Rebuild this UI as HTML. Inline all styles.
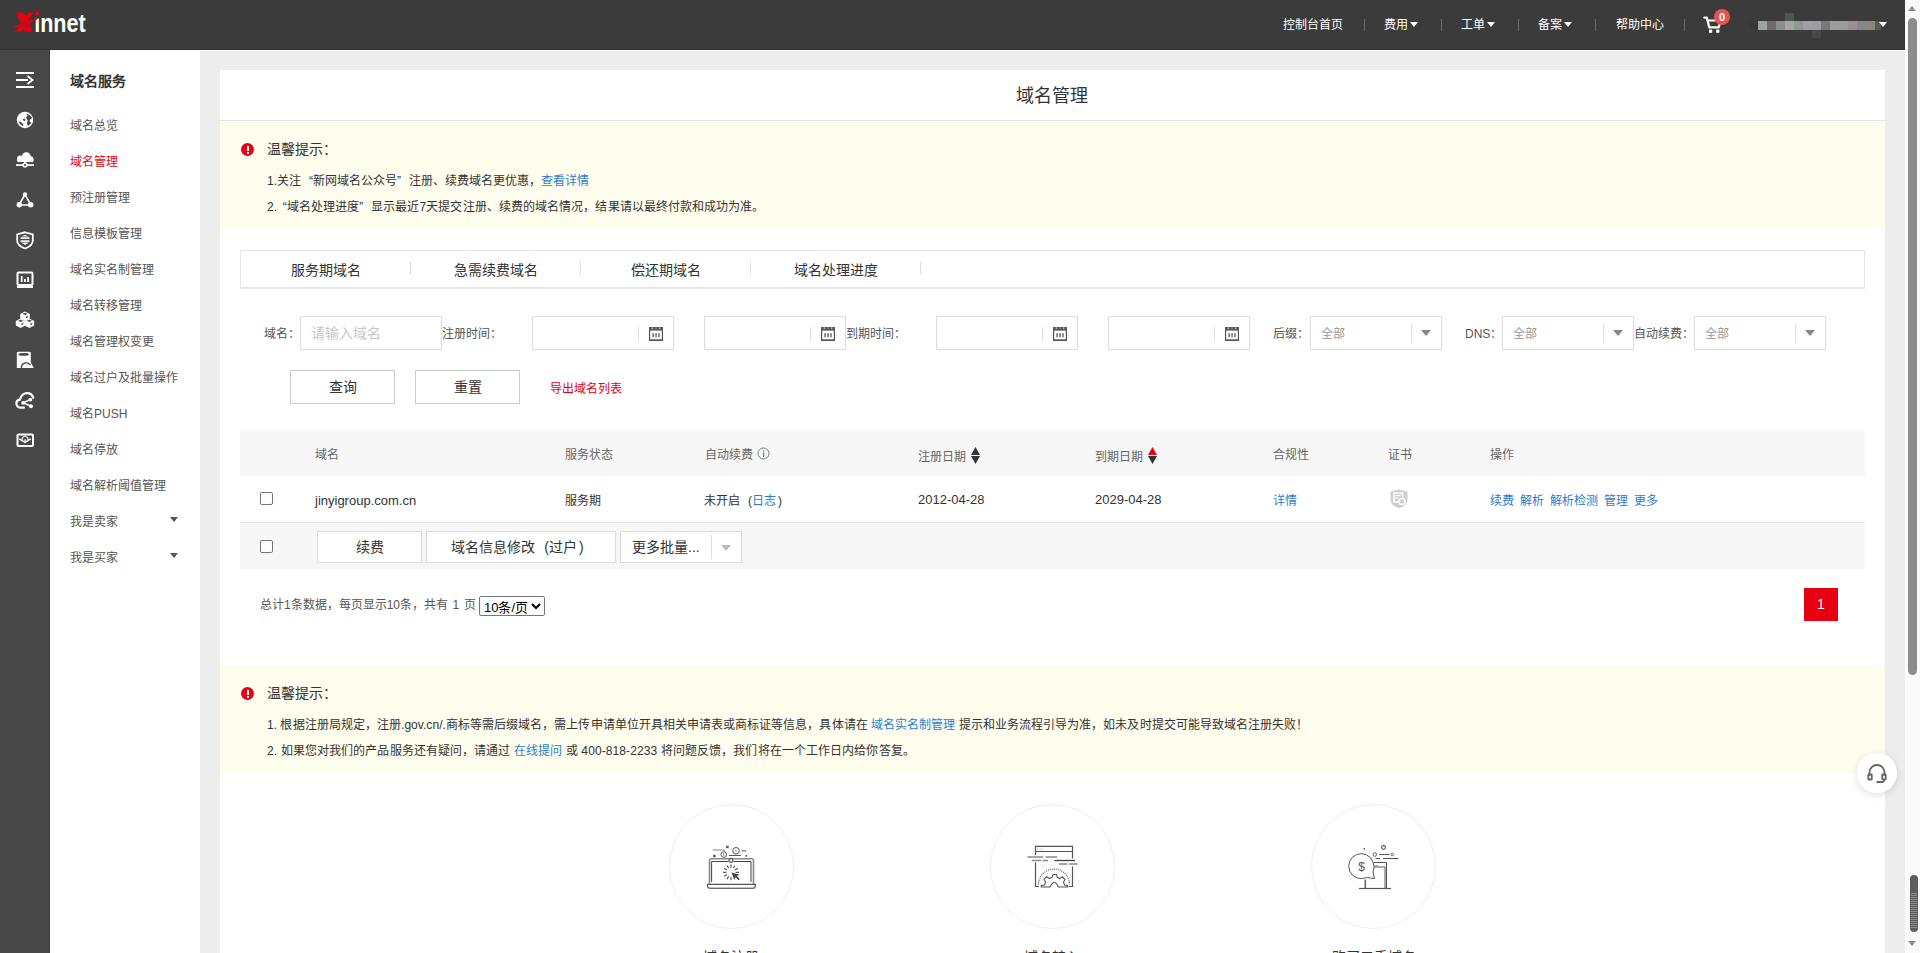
<!DOCTYPE html>
<html lang="zh-CN">
<head>
<meta charset="utf-8">
<title>域名管理</title>
<style>
*{box-sizing:border-box;margin:0;padding:0}
html,body{width:1920px;height:953px;overflow:hidden}
body{position:relative;background:#ededed;font-family:"Liberation Sans",sans-serif;font-size:12px;color:#333}
.a{position:absolute}
.t{position:absolute;white-space:nowrap;line-height:1}
#hdr{left:0;top:0;width:1905px;height:50px;background:#3b3b3b;border-bottom:1px solid #2f2f2f}
#wline{left:50px;top:50px;width:1855px;height:1px;background:#fff}
#icol{left:0;top:50px;width:50px;height:903px;background:#484848;border-right:1px solid #3c3c3c}
#side{left:50px;top:50px;width:150px;height:903px;background:#fff}
#card{left:220px;top:70px;width:1665px;height:883px;background:#fff}
#sb{left:1905px;top:0;width:15px;height:953px;background:#fafafa}
.nav{color:#fff;font-size:12px;font-weight:500}
.sep{position:absolute;width:1px;height:12px;background:#6a6a6a;top:19px}
.tri{position:absolute;width:0;height:0;border-left:4px solid transparent;border-right:4px solid transparent;border-top:5px solid #fff}
.si{color:#555;font-size:12px}
.notice{position:absolute;left:220px;width:1665px;background:#fffdee}
.ex{position:absolute;width:13px;height:13px;border-radius:50%;background:#e60012}
.ex:before{content:"";position:absolute;left:5.5px;top:2.5px;width:2px;height:5px;background:#fff}
.ex:after{content:"";position:absolute;left:5.5px;top:8.5px;width:2px;height:2px;background:#fff}
.ql{display:inline-block;width:12px;text-align:right}.qr{display:inline-block;width:12px;text-align:left}
.blue{color:#2d7bd0!important}
.inp{position:absolute;height:34px;border:1px solid #ddd;background:#fff}
.lbl{color:#555;font-size:12px}
.cal{position:absolute;top:10px;width:14px;height:14px}
.csep{position:absolute;top:9px;width:1px;height:17px;background:#e0e0e0}
.th{font-size:12px;color:#666}
.td{font-size:12px;color:#333}
.cb{position:absolute;width:13px;height:13px;border:1px solid #767676;border-radius:2px;background:#fff}
.btn{position:absolute;border:1px solid #ccc;background:#fff;font-size:14px;color:#333;text-align:center}
</style>
</head>
<body>
<svg width="0" height="0" style="position:absolute"><defs><g id="calg"><rect x="0.6" y="0.6" width="12.8" height="12.8" fill="none" stroke="#555" stroke-width="1.2"/><rect x="0" y="0" width="14" height="3.6" fill="#555"/><rect x="2.6" y="0.3" width="1.4" height="1.8" fill="#bbb"/><rect x="6.3" y="0.3" width="1.4" height="1.8" fill="#888"/><rect x="10" y="0.3" width="1.4" height="1.8" fill="#bbb"/><rect x="12.6" y="12.2" width="0" height="0"/><rect x="3.4" y="6.2" width="1.5" height="4" fill="#666"/><rect x="6.3" y="6.2" width="1.5" height="4" fill="#666"/><rect x="9.2" y="6.2" width="1.5" height="4" fill="#666"/><rect x="0" y="12.4" width="14" height="1.6" fill="#555"/></g></defs></svg>
<div id="hdr" class="a"></div>
<div id="wline" class="a"></div>
<div id="icol" class="a"></div>
<div id="side" class="a"></div>
<div id="card" class="a"></div>
<div id="sb" class="a"></div>



<!-- main content -->
<div class="a" style="left:220px;top:120px;width:1665px;height:1px;background:#e5e5e5"></div>
<div class="t" style="left:1016px;top:87px;font-size:18px;color:#333">域名管理</div>
<div class="notice" style="top:121px;height:109px"></div>
<div class="ex" style="left:241px;top:143px"></div>
<div class="t" style="left:267px;top:142px;font-size:14px;color:#333">温馨提示：</div>
<div class="t" style="left:267px;top:175px;font-size:12px;color:#333">1.关注<span class="ql">“</span>新网域名公众号<span class="qr">”</span>注册、续费域名更优惠，<span class="blue">查看详情</span></div>
<div class="t" style="left:267px;top:201px;font-size:12px;color:#333;letter-spacing:0.08px">2.<span class="ql" style="width:9.6px">“</span>域名处理进度<span class="qr">”</span>显示最近7天提交注册、续费的域名情况，结果请以最终付款和成功为准。</div>

<div class="a" style="left:240px;top:250px;width:1625px;height:39px;border:1px solid #e5e5e5;border-bottom-width:2px"></div>
<div class="t" style="left:291px;top:263px;font-size:14px;color:#333">服务期域名</div>
<div class="t" style="left:454px;top:263px;font-size:14px;color:#333">急需续费域名</div>
<div class="t" style="left:631px;top:263px;font-size:14px;color:#333">偿还期域名</div>
<div class="t" style="left:794px;top:263px;font-size:14px;color:#333">域名处理进度</div>
<div class="a" style="left:410px;top:261px;width:1px;height:14px;background:#e0e0e0"></div>
<div class="a" style="left:580px;top:261px;width:1px;height:14px;background:#e0e0e0"></div>
<div class="a" style="left:750px;top:261px;width:1px;height:14px;background:#e0e0e0"></div>
<div class="a" style="left:920px;top:261px;width:1px;height:14px;background:#e0e0e0"></div>


<!-- filters -->
<div class="t lbl" style="left:264px;top:328px">域名：</div>
<div class="inp" style="left:300px;top:316px;width:142px"></div>
<div class="t" style="left:311px;top:326px;font-size:14px;color:#c8c8c8">请输入域名</div>
<div class="t lbl" style="left:442px;top:328px">注册时间：</div>
<div class="inp" style="left:532px;top:316px;width:142px"><div class="csep" style="left:105px;top:10px;height:14px"></div><svg class="cal" style="left:116px" viewBox="0 0 14 14"><use href="#calg"/></svg></div>
<div class="inp" style="left:704px;top:316px;width:142px"><div class="csep" style="left:105px;top:10px;height:14px"></div><svg class="cal" style="left:116px" viewBox="0 0 14 14"><use href="#calg"/></svg></div>
<div class="t lbl" style="left:846px;top:328px">到期时间：</div>
<div class="inp" style="left:936px;top:316px;width:142px"><div class="csep" style="left:105px;top:10px;height:14px"></div><svg class="cal" style="left:116px" viewBox="0 0 14 14"><use href="#calg"/></svg></div>
<div class="inp" style="left:1108px;top:316px;width:142px"><div class="csep" style="left:105px;top:10px;height:14px"></div><svg class="cal" style="left:116px" viewBox="0 0 14 14"><use href="#calg"/></svg></div>
<div class="t lbl" style="left:1273px;top:328px">后缀：</div>
<div class="inp" style="left:1310px;top:316px;width:132px"><div class="t" style="left:10px;top:11px;color:#999;font-size:12px">全部</div><div class="csep" style="left:100px;top:7px;height:19px"></div><div class="tri" style="left:110px;top:13px;border-left-width:5px;border-right-width:5px;border-top:6px solid #888"></div></div>
<div class="t lbl" style="left:1465px;top:328px">DNS：</div>
<div class="inp" style="left:1502px;top:316px;width:132px"><div class="t" style="left:10px;top:11px;color:#999;font-size:12px">全部</div><div class="csep" style="left:100px;top:7px;height:19px"></div><div class="tri" style="left:110px;top:13px;border-left-width:5px;border-right-width:5px;border-top:6px solid #888"></div></div>
<div class="t lbl" style="left:1634px;top:328px">自动续费：</div>
<div class="inp" style="left:1694px;top:316px;width:132px"><div class="t" style="left:10px;top:11px;color:#999;font-size:12px">全部</div><div class="csep" style="left:100px;top:7px;height:19px"></div><div class="tri" style="left:110px;top:13px;border-left-width:5px;border-right-width:5px;border-top:6px solid #888"></div></div>

<div class="btn" style="left:290px;top:370px;width:105px;height:34px;line-height:32px">查询</div>
<div class="btn" style="left:415px;top:370px;width:105px;height:34px;line-height:32px">重置</div>
<div class="t" style="left:550px;top:383px;color:#e60012;font-size:12px">导出域名列表</div>

<!-- table -->
<div class="a" style="left:240px;top:430px;width:1625px;height:46px;background:#f7f7f7"></div>
<div class="a" style="left:240px;top:522px;width:1625px;height:1px;background:#e8e8e8"></div>
<div class="a" style="left:240px;top:523px;width:1625px;height:46px;background:#f7f7f7"></div>
<div class="t th" style="left:315px;top:449px">域名</div>
<div class="t th" style="left:565px;top:449px">服务状态</div>
<div class="t th" style="left:705px;top:449px">自动续费</div>
<svg class="a" style="left:757px;top:447px" width="13" height="13" viewBox="0 0 13 13"><circle cx="6.5" cy="6.5" r="5.5" fill="none" stroke="#777" stroke-width="1"/><rect x="6" y="5.5" width="1.2" height="4.5" fill="#777"/><rect x="6" y="3.2" width="1.2" height="1.2" fill="#777"/></svg>
<div class="t th" style="left:918px;top:451px">注册日期</div>
<svg class="a" style="left:971px;top:447px" width="9" height="17" viewBox="0 0 9 17"><path d="M4.5,0 L9,8 L0,8 Z" fill="#333"/><path d="M0,9 L9,9 L4.5,17 Z" fill="#333"/></svg>
<div class="t th" style="left:1095px;top:451px">到期日期</div>
<svg class="a" style="left:1148px;top:447px" width="9" height="17" viewBox="0 0 9 17"><path d="M4.5,0 L9,8 L0,8 Z" fill="#e60012"/><path d="M0,9 L9,9 L4.5,17 Z" fill="#333"/></svg>
<div class="t th" style="left:1273px;top:449px">合规性</div>
<div class="t th" style="left:1388px;top:449px">证书</div>
<div class="t th" style="left:1490px;top:449px">操作</div>

<div class="cb" style="left:260px;top:492px"></div>
<div class="t td" style="left:315px;top:494px;font-size:13px">jinyigroup.com.cn</div>
<div class="t td" style="left:565px;top:495px">服务期</div>
<div class="t td" style="left:704px;top:495px">未开启<span style="display:inline-block;width:12px;text-align:right">(</span><span class="blue">日志</span><span style="display:inline-block;width:12px;padding-left:2px">)</span></div>
<div class="t td" style="left:918px;top:493px;font-size:13px">2012-04-28</div>
<div class="t td" style="left:1095px;top:493px;font-size:13px">2029-04-28</div>
<div class="t td blue" style="left:1273px;top:495px">详情</div>
<svg class="a" style="left:1390px;top:489px" width="18" height="20" viewBox="0 0 18 20"><path d="M9,0.5 L17.5,2.5 L17.5,11 C17.5,15 13,18 9,19.5 C5,18 0.5,15 0.5,11 L0.5,2.5 Z" fill="#cfcfcf"/><rect x="4" y="4" width="8.5" height="9" fill="none" stroke="#fff" stroke-width="1.4"/><rect x="5.5" y="6" width="5" height="1.2" fill="#fff"/><rect x="5.5" y="8.5" width="3" height="1.2" fill="#fff"/><circle cx="12" cy="12.5" r="3" fill="#cfcfcf" stroke="#fff" stroke-width="1.3"/></svg>
<div class="t td blue" style="left:1490px;top:495px">续费</div>
<div class="t td blue" style="left:1520px;top:495px">解析</div>
<div class="t td blue" style="left:1550px;top:495px">解析检测</div>
<div class="t td blue" style="left:1604px;top:495px">管理</div>
<div class="t td blue" style="left:1634px;top:495px">更多</div>

<div class="cb" style="left:260px;top:540px"></div>
<div class="btn" style="left:317px;top:531px;width:105px;height:32px;line-height:30px;border-color:#ddd">续费</div>
<div class="btn" style="left:426px;top:531px;width:190px;height:32px;line-height:30px;border-color:#ddd">域名信息修改<span style="display:inline-block;width:14px;text-align:right">(</span>过户<span style="display:inline-block;width:14px;text-align:left;padding-left:2px">)</span></div>
<div class="btn" style="left:620px;top:531px;width:122px;height:32px;line-height:30px;border-color:#ddd;text-align:left;padding-left:11px">更多批量...<div class="csep" style="left:90px;top:3px;height:24px"></div><div class="tri" style="left:100px;top:13px;border-left-width:5px;border-right-width:5px;border-top:6px solid #bbb"></div></div>

<div class="t" style="left:260px;top:599px;font-size:12px;color:#555;word-spacing:1.2px">总计1条数据，每页显示10条，共有 1 页</div>
<div class="a" style="left:479px;top:596px;width:66px;height:20px;border:1px solid #767676;border-radius:2px;background:#fff"><div class="t" style="left:4px;top:4px;font-size:13px;color:#000">10条/页</div><svg class="a" style="left:51px;top:6px" width="10" height="7" viewBox="0 0 10 7"><path d="M1,1 L5,5 L9,1" fill="none" stroke="#000" stroke-width="2"/></svg></div>
<div class="a" style="left:1804px;top:588px;width:34px;height:33px;background:#e60012;color:#fff;font-size:14px;line-height:33px;text-align:center">1</div>

<!-- bottom notice -->
<div class="notice" style="top:665px;height:109px"></div>
<div class="ex" style="left:241px;top:687px"></div>
<div class="t" style="left:267px;top:686px;font-size:14px;color:#333">温馨提示：</div>
<div class="t" style="left:267px;top:719px;font-size:12px;color:#333;letter-spacing:0.05px">1. 根据注册局规定，注册.gov.cn/.商标等需后缀域名，需上传申请单位开具相关申请表或商标证等信息，具体请在 <span class="blue">域名实名制管理</span> 提示和业务流程引导为准，如未及时提交可能导致域名注册失败！</div>
<div class="t" style="left:267px;top:745px;font-size:12px;color:#333;letter-spacing:0.1px">2. 如果您对我们的产品服务还有疑问，请通过 <span class="blue">在线提问</span> 或 400-818-2233 将问题反馈，我们将在一个工作日内给你答复。</div>


<!-- feature circles -->
<div class="a" style="left:669px;top:804px;width:125px;height:125px;border:1px solid #efefef;border-radius:50%"></div>
<div class="a" style="left:990px;top:804px;width:125px;height:125px;border:1px solid #efefef;border-radius:50%"></div>
<div class="a" style="left:1311px;top:804px;width:125px;height:125px;border:1px solid #efefef;border-radius:50%"></div>
<svg class="a" style="left:700px;top:835px" width="65" height="60" viewBox="700 835 65 60" fill="none" stroke="#555" stroke-width="1">
  <path d="M709.5,884 V860.5 Q709.5,858.8 711,858.8 H752 Q753.5,858.8 753.5,860.5 V884" stroke="#888" stroke-width="1.6"/>
  <path d="M711.6,882 V861.5 H728.5 M733.5,861.5 H751 V882" stroke="#444" stroke-width="1"/>
  <path d="M707.5,884.3 H755.5 Q755.8,888.5 752.5,888.5 H710.5 Q707,888.5 707.5,884.3 Z" stroke="#555" stroke-width="1.2"/>
  <path d="M709,888 H754" stroke="#888" stroke-width="1"/>
  <circle cx="730.9" cy="860.3" r="2" stroke="#555" stroke-width="1.1"/>
  <path d="M735.60,872.30 L738.90,872.30 M731.00,876.90 L731.00,880.20 M728.70,876.28 L727.05,879.14 M727.02,874.60 L724.16,876.25 M726.40,872.30 L723.10,872.30 M727.02,870.00 L724.16,868.35 M728.70,868.32 L727.05,865.46 M731.00,867.70 L731.00,864.40 M733.30,868.32 L734.95,865.46 M734.98,870.00 L737.84,868.35" stroke="#555" stroke-width="1.2"/>
  <path d="M731.5,872.5 L734.3,880 L735.6,877.3 L738.6,880.3 L739.8,879.1 L736.8,876.1 L739.5,874.8 Z" fill="#444" stroke="none"/>
  <circle cx="723.8" cy="854.5" r="2.8" stroke-width="1"/>
  <path d="M723.8,853.3 V855.7" stroke-width="0.8"/>
  <circle cx="736" cy="850.8" r="3.3" stroke-width="1"/>
  <path d="M735.3,850 L736.7,851.6" stroke-width="0.8"/>
  <path d="M712.5,850 H723.5 Q724.5,850 724.5,851.5" stroke="#888" stroke-width="1.1"/>
  <path d="M741.5,850.8 H746.5" stroke="#888" stroke-width="1.4"/>
  <path d="M729,855.5 H741" stroke="#555" stroke-width="1"/>
  <path d="M713.3,854.8 L715.5,857 M715.5,854.8 L713.3,857 M726.3,845.8 L728.5,848 M728.5,845.8 L726.3,848" stroke-width="1.2"/>
  <rect x="745.5" y="855" width="1.6" height="1.6" fill="#555" stroke="none"/>
</svg>
<svg class="a" style="left:1020px;top:835px" width="65" height="60" viewBox="1020 835 65 60" fill="none" stroke="#555" stroke-width="1">
  <path d="M1035.5,855 V846.3 H1072.5 V858.5 M1072.5,866.5 V886.5 H1068.5 M1039,886.5 H1035.5 V862.3" stroke-width="1.2"/>
  <path d="M1035.5,851.5 H1072.5" stroke-width="1.1"/>
  <circle cx="1037.8" cy="849" r="0.5" fill="#888" stroke="none"/><circle cx="1040.2" cy="849" r="0.5" fill="#888" stroke="none"/><circle cx="1042.6" cy="849" r="0.5" fill="#888" stroke="none"/>
  <path d="M1027.5,857 H1043 M1045.5,857 H1057 M1032,860.5 H1041 M1042.5,860.5 H1048 M1054.5,860.5 H1075 M1059,864 H1067.5 M1069,864 H1077.5" stroke="#888" stroke-width="1.3"/>
  <path d="M1054.5,860.5 H1075" stroke="#444" stroke-width="1"/>
  <path d="M1038.5,884.5 A15,15 0 0 1 1069.5,884.5" stroke="#555" stroke-width="1.3" stroke-dasharray="0.9,1.1"/>
  <path d="M1041.3,887 V885.5 L1044.5,885 L1045.7,882 L1044,879.5 L1046.5,876.8 L1049.5,878.5 L1052,877.2 L1053,874.5 H1056.5 L1057.3,877.3 L1059.8,878.5 L1062.5,876.8 L1065,879.5 L1063.5,882 L1064.5,885 L1067.5,885.5 V887 H1058.3 Q1056.5,882.5 1054.3,882.5 Q1052,882.5 1050,887 Z" stroke-width="1.1"/>
</svg>
<svg class="a" style="left:1340px;top:835px" width="65" height="60" viewBox="1340 835 65 60" fill="none" stroke="#555" stroke-width="1">
  <path d="M1373,862 A12.5,12.5 0 1 0 1366.5,877.5 L1374.5,878.5 L1373,872 A12.5,12.5 0 0 0 1373,862 Z" stroke-width="1"/>
  <text x="1361.5" y="871" font-family="Liberation Sans" font-size="12" fill="#555" stroke="none" text-anchor="middle">$</text>
  <path d="M1374,862.5 H1386 Q1386.5,862.5 1386.5,863.5 V888" stroke-width="1.1"/>
  <path d="M1374,867 H1385 V888" stroke-width="1"/>
  <path d="M1374.5,865.5 H1378" stroke="#888" stroke-width="0.8"/>
  <path d="M1365.3,879.5 V888" stroke="#666" stroke-width="1.6"/>
  <path d="M1359,888.5 H1391" stroke-width="1.2"/>
  <circle cx="1364.3" cy="848.8" r="0.9" fill="#555" stroke="none"/>
  <circle cx="1383.5" cy="847.5" r="1.9" stroke-width="1.1"/>
  <circle cx="1374.8" cy="854.5" r="1.8" stroke-width="0.9"/>
  <circle cx="1392.3" cy="854.5" r="1.2" stroke-width="0.9"/>
  <path d="M1379,854.5 H1389.5" stroke-width="1"/>
  <path d="M1375.5,858.5 H1380 M1383,858.5 H1398.5" stroke-width="1"/>
</svg>
<div class="t" style="left:703px;top:950px;font-size:14px;color:#333">域名注册</div>
<div class="t" style="left:1024px;top:950px;font-size:14px;color:#333">域名转入</div>
<div class="t" style="left:1332px;top:950px;font-size:14px;color:#333">购买二手域名</div>

<!-- headset -->
<div class="a" style="left:1857px;top:753px;width:40px;height:40px;border-radius:50%;background:#fff;box-shadow:0 2px 10px rgba(0,0,0,0.12)"></div>
<svg class="a" style="left:1865px;top:762px" width="24" height="24" viewBox="0 0 24 24" fill="none" stroke="#666" stroke-width="1.8">
  <path d="M4.5,14 V10.5 A7.5,7.5 0 0 1 19.5,10.5 V14"/>
  <rect x="3.3" y="12.5" width="3.5" height="5" rx="0.5"/>
  <rect x="17.2" y="12.5" width="3.5" height="5" rx="0.5"/>
  <path d="M19,17.5 V18.5 Q19,20 17.5,20 H11.5"/>
</svg>

<!-- scrollbar -->
<div class="tri" style="left:1908px;top:6px;border-top:0;border-bottom:5px solid #8c8c8c;border-left-width:4.5px;border-right-width:4.5px"></div>
<div class="a" style="left:1908px;top:18px;width:9px;height:657px;border-radius:4.5px;background:#8c8c8c"></div>
<div class="a" style="left:1909.5px;top:875px;width:8px;height:57px;border-radius:4px;background:#5e5e5e;overflow:hidden"><div class="a" style="left:1px;top:18px;width:6px;height:36px;background:repeating-linear-gradient(180deg,#22c55e 0 1.2px,transparent 1.2px 2px)"></div></div>
<div class="tri" style="left:1908px;top:941px;border-top:5px solid #8c8c8c;border-left-width:4.5px;border-right-width:4.5px"></div>

<!-- sidebar icons -->
<svg class="a" style="left:0;top:50px" width="50" height="420" viewBox="0 50 50 420" fill="#fff" stroke="none">
  <rect x="16" y="72" width="18" height="2"/><rect x="16" y="79" width="12" height="2"/><rect x="16" y="86" width="18" height="2"/>
  <path d="M27.5,76 L32.5,80 L27.5,84" fill="none" stroke="#fff" stroke-width="1.8"/>
  <circle cx="25" cy="120" r="8.2"/>
  <path d="M25.8,113.4 L27.5,115.6 L26.1,117.8 L27.7,120.6 L26.9,123.5 L28,125.8 Q30.6,124.6 31.4,122.6 Q29.4,121.9 29.5,119.9 Q31.4,119.2 32.1,118 Q30.6,114.6 25.8,113.4 Z" fill="#484848"/>
  <path d="M18.2,121.6 L20.9,122 L23,123.9 L23.3,126.3 Q19.8,125.2 18.2,121.6 Z" fill="#484848"/>
  <path d="M22.6,119.6 L24.3,118.6 L25.6,119.9 L24.3,121.2 Z" fill="#484848"/>
  <circle cx="26.3" cy="156.6" r="4.4"/><circle cx="20.3" cy="158.8" r="3.3"/><circle cx="30.6" cy="159.2" r="2.9"/><rect x="17" y="158.8" width="16.5" height="3.2" rx="1.5"/>
  <rect x="16" y="164.2" width="18" height="1.8"/><circle cx="25" cy="165" r="2.6"/><circle cx="25" cy="165" r="1.1" fill="#484848"/>
  <rect x="24.2" y="162" width="1.6" height="2"/>
  <path d="M25,194.5 L19,205 L31,205 Z" fill="none" stroke="#fff" stroke-width="1.6"/>
  <circle cx="25" cy="194.5" r="2.2"/><circle cx="19.3" cy="204.8" r="2.7"/><circle cx="30.7" cy="204.8" r="2.7"/>
  <path d="M25,232.3 L32.8,234.5 L32.8,240.5 C32.8,244 29,247 25,248.5 C21,247 17.2,244 17.2,240.5 L17.2,234.5 Z" fill="none" stroke="#fff" stroke-width="1.8"/>
  <rect x="20.5" y="237.3" width="9" height="1.6"/><rect x="20.5" y="240.3" width="9" height="1.6"/>
  <path d="M21,236.5 L25,235 L29,236.5 Z M21,242.5 L29,242.5 L25,245 Z" />
  <rect x="17.5" y="272.5" width="15" height="12.5" rx="1" fill="none" stroke="#fff" stroke-width="2"/>
  <rect x="20.8" y="276" width="1.8" height="6"/><rect x="24" y="279" width="1.8" height="3"/><rect x="27.2" y="277" width="1.8" height="5"/>
  <rect x="17" y="286" width="16" height="2"/>
  <path d="M25,311.5 L29.8,313.9 L29.8,318.5 L25,320.9 L20.2,318.5 L20.2,313.9 Z"/><path d="M22.4,313.8 L25,312.7 L27.6,313.8 L25,315.0 Z" fill="#484848"/><path d="M25.8,318.4 L27.8,317.0 L27.8,315.59999999999997 L25.8,317.0 Z" fill="#484848"/><path d="M20.6,318.5 L25.400000000000002,320.9 L25.400000000000002,325.5 L20.6,327.9 L15.8,325.5 L15.8,320.9 Z"/><path d="M18.0,320.8 L20.6,319.7 L23.200000000000003,320.8 L20.6,322.0 Z" fill="#484848"/><path d="M21.400000000000002,325.4 L23.400000000000002,324.0 L23.400000000000002,322.59999999999997 L21.400000000000002,324.0 Z" fill="#484848"/><path d="M29.4,318.5 L34.199999999999996,320.9 L34.199999999999996,325.5 L29.4,327.9 L24.599999999999998,325.5 L24.599999999999998,320.9 Z"/><path d="M26.799999999999997,320.8 L29.4,319.7 L32.0,320.8 L29.4,322.0 Z" fill="#484848"/><path d="M30.2,325.4 L32.199999999999996,324.0 L32.199999999999996,322.59999999999997 L30.2,324.0 Z" fill="#484848"/>
  <path d="M16.8,353 Q16.8,351.7 18.5,351.7 H29 Q30.8,351.7 30.8,353 V362.5 L33.8,368 H16.8 Z"/>
  <ellipse cx="23.7" cy="354.4" rx="5.2" ry="1.3" fill="#484848"/>
  <path d="M21.3,368.5 Q21.3,363.8 25,363 Q28.5,362.5 30.5,365" fill="none" stroke="#484848" stroke-width="1.3"/>
  <path d="M24,407.6 H20.5 C17.8,407.6 16.4,405.3 16.4,403.3 C16.4,401.3 17.9,399.8 19.9,399.6 C20.9,395.5 24,393.1 27,393.1 C30,393.1 32.4,395 33.3,397.8" fill="none" stroke="#fff" stroke-width="2.2" stroke-linecap="round"/>
  <path d="M23.2,402.8 L30.3,399.6 M23.2,402.8 L31,406.3" fill="none" stroke="#fff" stroke-width="1.5"/>
  <circle cx="23.2" cy="402.8" r="1.9"/><circle cx="30.3" cy="399.6" r="1.9"/><circle cx="31" cy="406.3" r="2"/>
  <rect x="17.5" y="434.5" width="15.5" height="11.5" rx="1" fill="none" stroke="#fff" stroke-width="2"/>
  <path d="M19.3,438.8 L25,442.4 L30.7,438.8" fill="none" stroke="#fff" stroke-width="1.4"/>
  <path d="M22.2,440.6 V437.9 L25,435.6 L27.8,437.9 V440.6" fill="none" stroke="#fff" stroke-width="1.1"/><rect x="24.4" y="439.3" width="1.3" height="2" fill="#fff"/>
</svg>
<div class="t" style="left:70px;top:74px;font-size:14px;font-weight:bold;color:#333">域名服务</div>
<div class="t si" style="left:70px;top:120px">域名总览</div>
<div class="t si" style="left:70px;top:156px;color:#e60012">域名管理</div>
<div class="t si" style="left:70px;top:192px">预注册管理</div>
<div class="t si" style="left:70px;top:228px">信息模板管理</div>
<div class="t si" style="left:70px;top:264px">域名实名制管理</div>
<div class="t si" style="left:70px;top:300px">域名转移管理</div>
<div class="t si" style="left:70px;top:336px">域名管理权变更</div>
<div class="t si" style="left:70px;top:372px">域名过户及批量操作</div>
<div class="t si" style="left:70px;top:408px">域名PUSH</div>
<div class="t si" style="left:70px;top:444px">域名停放</div>
<div class="t si" style="left:70px;top:480px">域名解析阈值管理</div>
<div class="t si" style="left:70px;top:516px">我是卖家</div>
<div class="t si" style="left:70px;top:552px">我是买家</div>
<div class="tri" style="left:170px;top:517px;border-top-color:#555"></div>
<div class="tri" style="left:170px;top:553px;border-top-color:#555"></div>

<!-- header content -->
<svg class="a" style="left:0;top:0" width="100" height="50" viewBox="0 0 100 50">
  <polygon points="15.5,12.5 23.5,12.5 33,31.7 25,31.7" fill="#e60012"/>
  <polygon points="28.3,12.5 33.5,12.5 21.5,31.7 15.5,31.7" fill="#e60012"/>
  <text x="34.2" y="31.7" font-family="Liberation Sans" font-weight="bold" font-size="20" fill="#fff" textLength="51.5" lengthAdjust="spacingAndGlyphs" transform="translate(0,31.7) scale(1,1.33) translate(0,-31.7)">&#305;nnet</text>
  <path d="M11.8,27.3 Q22,30.5 39.8,17.3 Q22,22.6 11.8,27.3 Z" fill="#e60012" stroke="#3b3b3b" stroke-width="0.5"/>
  <circle cx="37.3" cy="13.3" r="1.9" fill="#e60012"/>
</svg>
<div class="t nav" style="left:1283px;top:19px">控制台首页</div>
<div class="sep" style="left:1364px"></div>
<div class="t nav" style="left:1384px;top:19px">费用</div><div class="tri" style="left:1410px;top:22px"></div>
<div class="sep" style="left:1441px"></div>
<div class="t nav" style="left:1461px;top:19px">工单</div><div class="tri" style="left:1487px;top:22px"></div>
<div class="sep" style="left:1518px"></div>
<div class="t nav" style="left:1538px;top:19px">备案</div><div class="tri" style="left:1564px;top:22px"></div>
<div class="sep" style="left:1595px"></div>
<div class="t nav" style="left:1616px;top:19px">帮助中心</div>
<div class="sep" style="left:1684px"></div>
<svg class="a" style="left:1703px;top:15px" width="20" height="20" viewBox="0 0 20 20">
  <path d="M1.3,2.6 H3.8 L6.2,12.3 H15.8 L17.6,5.5 H5" fill="none" stroke="#fff" stroke-width="2.2" stroke-linejoin="round" stroke-linecap="round"/>
  <rect x="6" y="14.6" width="3.2" height="3.2" fill="#fff"/>
  <rect x="13.2" y="14.6" width="3.2" height="3.2" fill="#fff"/>
</svg>
<div class="a" style="left:1714px;top:9px;width:16px;height:16px;border-radius:50%;background:#e95353;color:#fff;font-size:11px;line-height:16px;text-align:center;font-weight:bold">0</div>
<div class="a" style="left:1749px;top:21px;width:132px;height:9px;background:linear-gradient(90deg,#33383a 0 9px,#a0a3a3 9px 18px,#6e6c68 18px 27px,#8b8e92 27px 36px,#aaa49e 36px 45px,#8e9696 45px 54px,#a49ea4 54px 63px,#9c9d9f 63px 72px,#7a7878 72px 81px,#9a9c9e 81px 90px,#989c9c 90px 99px,#9a8e8e 99px 108px,#85858f 108px 117px,#8c8878 117px 126px,#565a5c 126px 132px)"></div>
<div class="a" style="left:1785px;top:13px;width:9px;height:8px;background:#505452"></div>
<div class="a" style="left:1812px;top:30px;width:9px;height:8px;background:#484848"></div>
<div class="tri" style="left:1879px;top:22px"></div>

</body>
</html>
